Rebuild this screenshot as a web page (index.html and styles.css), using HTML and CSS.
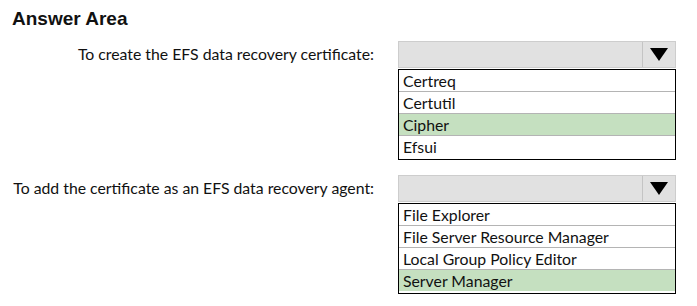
FILE: index.html
```html
<!DOCTYPE html>
<html lang="en">
<head>
    <meta charset="UTF-8">
    <title>Answer Area</title>
    <link rel="stylesheet" href="styles.css">
</head>
<body>
    <div class="page">
        <h1>Answer Area</h1>

        <div class="question">
            <div class="label">To create the EFS data recovery certificate:</div>
            <div class="dropdown">
                <div class="select"><span class="arrow-box"><span class="arrow"></span></span></div>
                <ul class="options">
                    <li>Certreq</li>
                    <li>Certutil</li>
                    <li class="correct">Cipher</li>
                    <li>Efsui</li>
                </ul>
            </div>
        </div>

        <div class="question">
            <div class="label">To add the certificate as an EFS data recovery agent:</div>
            <div class="dropdown">
                <div class="select"><span class="arrow-box"><span class="arrow"></span></span></div>
                <ul class="options">
                    <li>File Explorer</li>
                    <li>File Server Resource Manager</li>
                    <li>Local Group Policy Editor</li>
                    <li class="correct">Server Manager</li>
                </ul>
            </div>
        </div>
    </div>
</body>
</html>
```

FILE: styles.css
```css
body {
    margin: 0;
    background: #fff;
    font-family: Lato, "Open Sans", sans-serif;
    color: #111;
}

.page {
    padding: 8px 0 0 12px;
}

h1 {
    margin: 0 0 11px;
    font-family: "Liberation Sans", Arial, sans-serif;
    font-size: 19px;
    font-weight: bold;
    line-height: 22px;
}

.question {
    display: grid;
    grid-template-columns: 362px 278px;
    column-gap: 24px;
    margin-bottom: 15px;
}

.label {
    text-align: right;
    font-size: 15.8px;
    line-height: 26px;
}

.select {
    height: 25px;
    background: #e1e1e1;
    border: 1px solid #cdcdcd;
    display: flex;
    justify-content: flex-end;
}

.arrow-box {
    width: 32px;
    border-left: 1px solid #c4c4c4;
    display: flex;
    align-items: center;
    justify-content: center;
}

.arrow {
    width: 0;
    height: 0;
    border-left: 9px solid transparent;
    border-right: 9px solid transparent;
    border-top: 13px solid #000;
}

.options {
    list-style: none;
    margin: 1px 0 0;
    padding: 0 0 2px;
    border: 1px solid #000;
    font-size: 15.8px;
}

.options li {
    height: 21px;
    line-height: 21px;
    padding-left: 4px;
    border-bottom: 1px solid #b4b4b4;
}

.options li:last-child {
    border-bottom: none;
}

.options li.correct {
    background: #c5e0c0;
}
```
